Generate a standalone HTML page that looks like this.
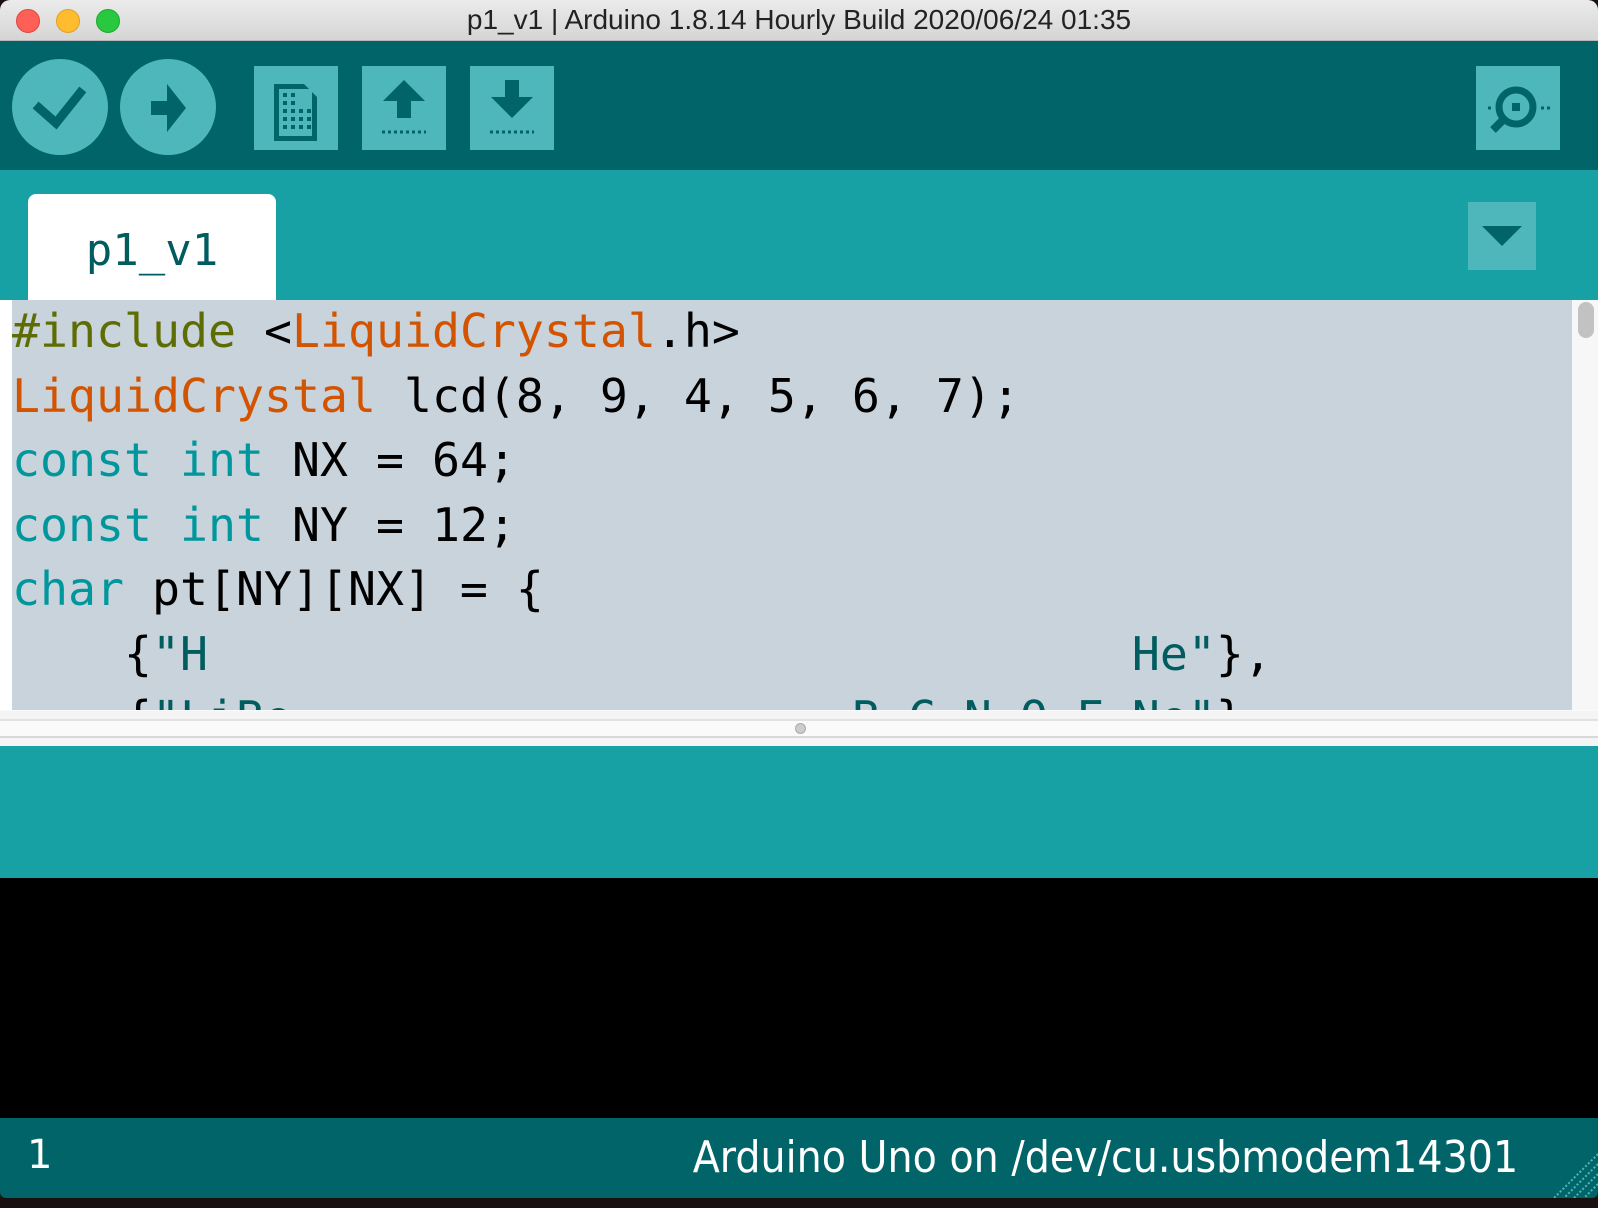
<!DOCTYPE html>
<html><head><meta charset="utf-8"><style>
*{margin:0;padding:0;box-sizing:border-box}
body{width:1598px;height:1208px;overflow:hidden;background:#1a1010;position:relative;font-family:"Liberation Sans",sans-serif}
.abs{position:absolute}
#title{left:0;top:0;width:1598px;height:41px;background:linear-gradient(#ebebeb,#d5d5d5);border-bottom:1px solid #b8b8b8;border-radius:10px 10px 0 0}
#title .t{position:absolute;left:0;right:0;top:4px;text-align:center;font-size:28px;color:#222}
.dot{position:absolute;top:9px;width:24px;height:24px;border-radius:50%}
#tb{left:0;top:41px;width:1598px;height:129px;background:#006468}
#tabbar{left:0;top:170px;width:1598px;height:130px;background:#17a1a5}
#tab{left:28px;top:194px;width:248px;height:106px;background:#fff;border-radius:8px 8px 0 0;font-family:"DejaVu Sans Mono",monospace;font-size:44px;color:#005c5f;text-align:center;line-height:114px}
#ed{left:0;top:300px;width:1572px;height:410px;background:#c9d3dc;overflow:hidden;border-left:12px solid #fff}
#ed pre{font-family:"DejaVu Sans Mono",monospace;font-size:46.5px;line-height:64.5px;margin-top:-1px;color:#000;white-space:pre}
.g{color:#5e6d03}.o{color:#d35400}.b{color:#00979c}.s{color:#005c5f}
#sb{left:1572px;top:300px;width:26px;height:410px;background:#f7f7f7}
#div{left:0;top:710px;width:1598px;height:36px;background:#f4f4f4;border-top:1px solid #fafafa}
#teal{left:0;top:746px;width:1598px;height:132px;background:#17a1a5}
#con{left:0;top:878px;width:1598px;height:240px;background:#000}
#st{left:0;top:1118px;width:1598px;height:80px;background:#006468;color:#fff;font-family:"DejaVu Sans",sans-serif;font-size:40px;border-radius:0 0 6px 6px}
</style></head><body>
<div id="title" class="abs">
<div class="dot" style="left:16px;background:#fe5f57;border:1px solid #e0443e"></div>
<div class="dot" style="left:56px;background:#febc2e;border:1px solid #dea123"></div>
<div class="dot" style="left:96px;background:#28c840;border:1px solid #1aab29"></div>
<div class="t">p1_v1 | Arduino 1.8.14 Hourly Build 2020/06/24 01:35</div>
</div>
<div id="tb" class="abs">
<svg width="1598" height="129" style="position:absolute;left:0;top:0">
<circle cx="60" cy="66" r="48" fill="#4db7bb"/>
<path d="M39 67 L56 82 L80 52" stroke="#006468" stroke-width="9" fill="none" stroke-linecap="square"/>
<circle cx="168" cy="66" r="48" fill="#4db7bb"/>
<path d="M151 60 h16 v-17 l19 24 l-19 24 v-17 h-16z" fill="#006468"/>
<rect x="254" y="25" width="84" height="84" fill="#4db7bb"/>
<path d="M274 43 h30 l13 13 v44 h-43z" fill="#006468"/>
<rect x="279" y="48" width="33" height="47" fill="#4db7bb"/>
<g fill="#006468">
<rect x="283" y="52" width="4" height="4"/><rect x="291" y="52" width="4" height="4"/>
<rect x="283" y="60" width="4" height="4"/><rect x="291" y="60" width="4" height="4"/>
<rect x="283" y="68" width="4" height="4"/><rect x="291" y="68" width="4" height="4"/><rect x="299" y="68" width="4" height="4"/><rect x="307" y="68" width="4" height="4"/>
<rect x="283" y="76" width="4" height="4"/><rect x="291" y="76" width="4" height="4"/><rect x="299" y="76" width="4" height="4"/><rect x="307" y="76" width="4" height="4"/>
<rect x="283" y="84" width="4" height="4"/><rect x="291" y="84" width="4" height="4"/><rect x="299" y="84" width="4" height="4"/><rect x="307" y="84" width="4" height="4"/>
</g>
<rect x="362" y="25" width="84" height="84" fill="#4db7bb"/>
<path d="M404 39 L425 60 H411 V77 H397 V60 H383z" fill="#006468"/>
<path d="M382 91 H426" stroke="#006468" stroke-width="3" stroke-dasharray="3 3"/>
<rect x="470" y="25" width="84" height="84" fill="#4db7bb"/>
<path d="M505 39 H519 V56 H533 L512 77 L491 56 H505z" fill="#006468"/>
<path d="M490 91 H534" stroke="#006468" stroke-width="3" stroke-dasharray="3 3"/>
<rect x="1476" y="25" width="84" height="84" fill="#4db7bb"/>
<circle cx="1516" cy="66" r="17" stroke="#006468" stroke-width="7" fill="none"/>
<rect x="1512" y="62" width="8" height="8" fill="#006468"/>
<path d="M1504 78 L1493 89" stroke="#006468" stroke-width="8"/>
<path d="M1488 67 h4 M1541 67 h10" stroke="#006468" stroke-width="3" stroke-dasharray="3 3"/>
</svg>
</div>
<div id="tabbar" class="abs">
<svg width="1598" height="130" style="position:absolute;left:0;top:0"><rect x="1468" y="32" width="68" height="68" fill="#4db7bb"/><path d="M1482 56 H1522 L1502 76z" fill="#006468"/></svg>
</div>
<div id="tab" class="abs">p1_v1</div>
<div id="ed" class="abs"><pre><span class="g">#include</span> &lt;<span class="o">LiquidCrystal</span>.h&gt;
<span class="o">LiquidCrystal</span> lcd(8, 9, 4, 5, 6, 7);
<span class="b">const</span> <span class="b">int</span> NX = 64;
<span class="b">const</span> <span class="b">int</span> NY = 12;
<span class="b">char</span> pt[NY][NX] = {
    {<span class="s">"H                                 He"</span>},
    {<span class="s">"LiBe                    B C N O F Ne"</span>},</pre></div>
<div id="sb" class="abs"><div style="position:absolute;left:6px;top:2px;width:16px;height:36px;border-radius:8px;background:#c2c2c2"></div></div>
<div id="div" class="abs"><div style="position:absolute;left:0;top:8px;width:1598px;height:19px;background:#fafafa;border-top:2px solid #e2e2e2;border-bottom:2px solid #d8d8d8"></div><div style="position:absolute;left:795px;top:12px;width:11px;height:11px;border-radius:50%;background:#ccc;border:1px solid #aaa"></div></div>
<div id="teal" class="abs"></div>
<div id="con" class="abs"></div>
<div id="st" class="abs"><span style="position:absolute;left:27px;top:14px">1</span><span style="position:absolute;right:80px;top:14px;transform:scaleX(0.9);transform-origin:right center;font-size:44px">Arduino Uno on /dev/cu.usbmodem14301</span>
<svg width="50" height="50" style="position:absolute;right:0;bottom:0"><path d="M50 6 L6 50 M50 16 L16 50 M50 26 L26 50 M50 36 L36 50" stroke="#4db7bb" stroke-width="2" stroke-dasharray="2 2"/></svg></div>
</body></html>
